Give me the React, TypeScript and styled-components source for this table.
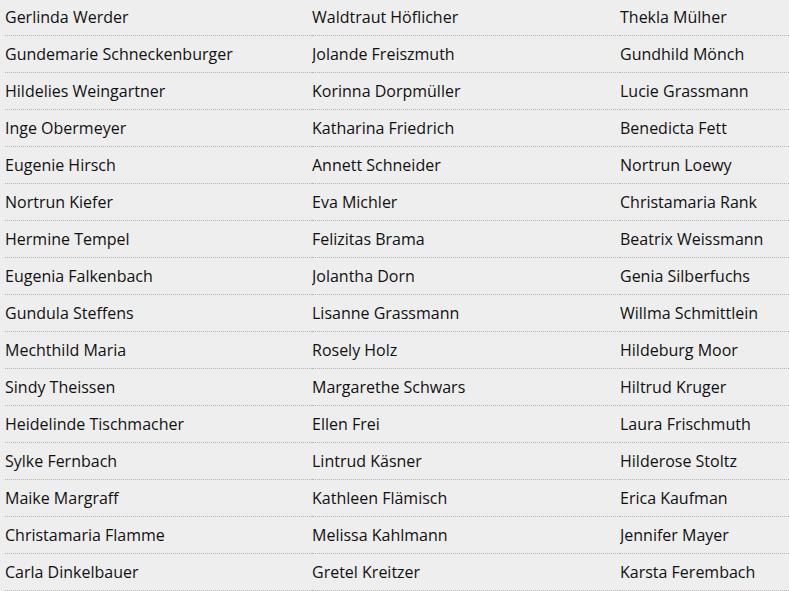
import React from "react";
import styled, { createGlobalStyle } from "styled-components";

const Global = createGlobalStyle`
  html, body { margin: 0; padding: 0; background: #eeeeee; overflow: hidden; }
  body { font-family: "Open Sans", "Liberation Sans", sans-serif; }
`;

const List = styled.ul`
  list-style: none;
  margin: -1px 0 0 0;
  padding: 0 0 0 5px;
  display: grid;
  grid-template-columns: 307px 308px 1fr;
`;

const Item = styled.li`
  font-size: 16px;
  line-height: 22px;
  color: #111;
  padding: 7px 0;
  border-bottom: 1px dotted #b5b5b5;
  white-space: nowrap;
  overflow: hidden;
`;

const names = [
  ["Gerlinda Werder", "Waldtraut Höflicher", "Thekla Mülher"],
  ["Gundemarie Schneckenburger", "Jolande Freiszmuth", "Gundhild Mönch"],
  ["Hildelies Weingartner", "Korinna Dorpmüller", "Lucie Grassmann"],
  ["Inge Obermeyer", "Katharina Friedrich", "Benedicta Fett"],
  ["Eugenie Hirsch", "Annett Schneider", "Nortrun Loewy"],
  ["Nortrun Kiefer", "Eva Michler", "Christamaria Rank"],
  ["Hermine Tempel", "Felizitas Brama", "Beatrix Weissmann"],
  ["Eugenia Falkenbach", "Jolantha Dorn", "Genia Silberfuchs"],
  ["Gundula Steffens", "Lisanne Grassmann", "Willma Schmittlein"],
  ["Mechthild Maria", "Rosely Holz", "Hildeburg Moor"],
  ["Sindy Theissen", "Margarethe Schwars", "Hiltrud Kruger"],
  ["Heidelinde Tischmacher", "Ellen Frei", "Laura Frischmuth"],
  ["Sylke Fernbach", "Lintrud Käsner", "Hilderose Stoltz"],
  ["Maike Margraff", "Kathleen Flämisch", "Erica Kaufman"],
  ["Christamaria Flamme", "Melissa Kahlmann", "Jennifer Mayer"],
  ["Carla Dinkelbauer", "Gretel Kreitzer", "Karsta Ferembach"],
];

export default function App() {
  return (
    <>
      <Global />
      <List>
        {names.flat().map((n, i) => (
          <Item key={i}>{n}</Item>
        ))}
      </List>
    </>
  );
}
